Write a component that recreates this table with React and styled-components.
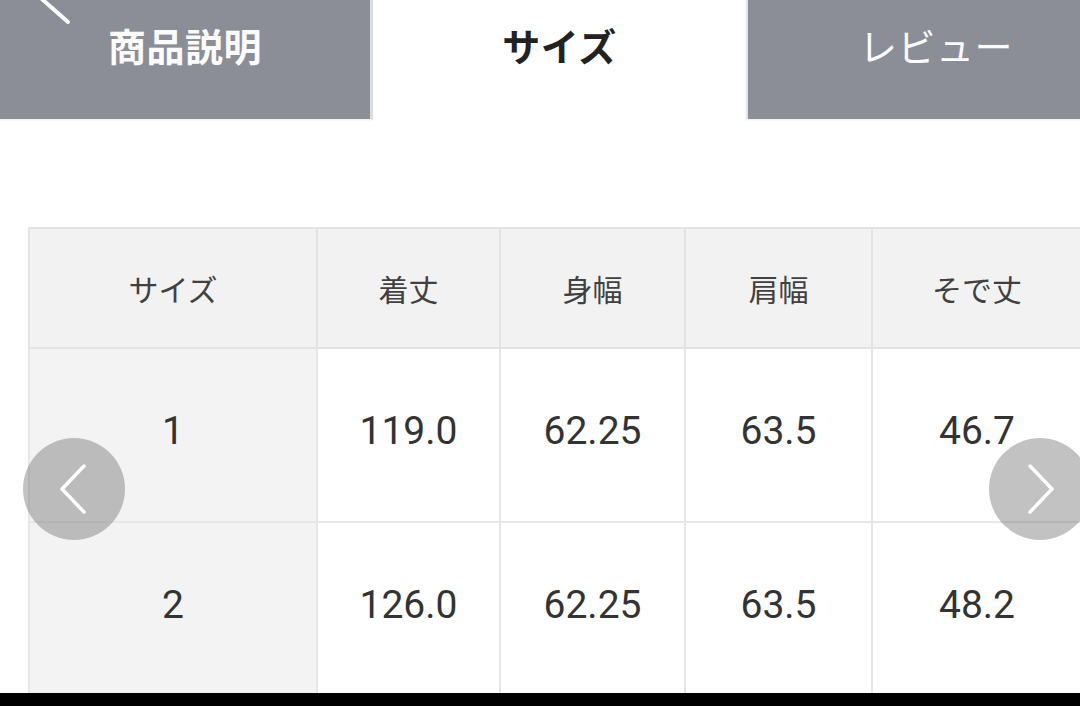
import React from 'react';
import styled, { createGlobalStyle } from "styled-components";

const GlobalStyle = createGlobalStyle`
  html, body {
    margin: 0;
    padding: 0;
    background: #fff;
    overflow: hidden;
  }
  body {
    font-family: "Noto Sans CJK JP", "Noto Sans", sans-serif;
  }
`;

const headers = ["サイズ", "着丈", "身幅", "肩幅", "そで丈"];
const rows = [
  ["1", "119.0", "62.25", "63.5", "46.7"],
  ["2", "126.0", "62.25", "63.5", "48.2"],
];
const colWidths = [288, 183, 185, 187, 210];

function App() {
  return (
    <Page>
      <GlobalStyle />
      <Screen>
        <TabBar>
          <Tab width={373} edge="right" weight={700}>商品説明</Tab>
          <Tab width={373} active weight={700}>サイズ</Tab>
          <Tab width={378} edge="left" weight={400}>レビュー</Tab>
        </TabBar>

        <TableWrap>
          <SizeTable>
            <colgroup>
              {colWidths.map((w, i) => <col key={i} style={{ width: w }} />)}
            </colgroup>
            <thead>
              <tr>
                {headers.map((h) => <Th key={h}>{h}</Th>)}
              </tr>
            </thead>
            <tbody>
              {rows.map((r) => (
                <tr key={r[0]}>
                  {r.map((v, i) => <Td key={i} first={i === 0}>{v}</Td>)}
                </tr>
              ))}
            </tbody>
          </SizeTable>
        </TableWrap>

        <BackMark width="80" height="30" viewBox="0 0 80 30">
          <polyline points="20,-20 43,0 68,22" fill="none" stroke="#fff" strokeWidth="4" strokeLinecap="round" />
        </BackMark>

        <NavButton side="left">
          <svg width="40" height="60" viewBox="0 0 40 60">
            <polyline points="31,7 9,30 31,53" fill="none" stroke="#fff" strokeWidth="3.5" strokeLinecap="round" strokeLinejoin="round" />
          </svg>
        </NavButton>
        <NavButton side="right">
          <svg width="40" height="60" viewBox="0 0 40 60">
            <polyline points="9,7 31,30 9,53" fill="none" stroke="#fff" strokeWidth="3.5" strokeLinecap="round" strokeLinejoin="round" />
          </svg>
        </NavButton>
      </Screen>
      <BottomBar />
    </Page>
  );
}

export default App;

const Page = styled.div`
  width: 1080px;
  height: 706px;
  display: flex;
  flex-direction: column;
  overflow: hidden;
`;

const Screen = styled.div`
  position: relative;
  flex: 1;
  overflow: hidden;
  background: #fff;
`;

const TabBar = styled.div`
  display: flex;
  height: 119px;
`;

const Tab = styled.div`
  width: ${(p) => p.width}px;
  flex-shrink: 0;
  box-sizing: border-box;
  display: flex;
  justify-content: center;
  align-items: flex-start;
  padding-top: 18px;
  font-size: 38px;
  line-height: 1.4;
  font-weight: ${(p) => p.weight};
  letter-spacing: 0.5px;
  color: ${(p) => (p.active ? "#222" : "#fbfbfc")};
  background: ${(p) => (p.active ? "#fff" : "#8b8e96")};
  border-right: ${(p) => (p.edge === "right" ? "3px solid #dcdde0" : "none")};
  border-left: ${(p) => (p.edge === "left" ? "2px solid #e4e5e7" : "none")};
  box-shadow: ${(p) => (p.active ? "none" : "0 1px 2px rgba(0,0,0,0.08)")};
`;

const TableWrap = styled.div`
  margin-top: 108px;
  padding-left: 28px;
  width: 1200px;
`;

const SizeTable = styled.table`
  border-collapse: collapse;
  table-layout: fixed;
  width: 1053px;
`;

const Th = styled.th`
  height: 118px;
  padding: 0;
  background: #f2f2f2;
  border: 2px solid #e3e3e3;
  font-family: "Noto Sans CJK JP", sans-serif;
  font-weight: 400;
  font-size: 30px;
  color: #404040;
  text-align: center;
  vertical-align: middle;
`;

const Td = styled.td`
  height: 174px;
  padding: 0 0 8px;
  box-sizing: border-box;
  background: ${(p) => (p.first ? "#f3f3f3" : "#fff")};
  border: 2px solid #e6e6e6;
  font-family: Roboto, "Liberation Sans", sans-serif;
  font-size: 39px;
  color: #333;
  text-align: center;
  vertical-align: middle;
`;

const BackMark = styled.svg`
  position: absolute;
  top: 0;
  left: 0;
`;

const NavButton = styled.div`
  position: absolute;
  top: 438px;
  ${(p) => (p.side === "left" ? "left: 23px;" : "left: 989px;")}
  width: 102px;
  height: 102px;
  border-radius: 50%;
  background: rgba(120, 120, 120, 0.45);
  display: flex;
  align-items: center;
  justify-content: center;
  svg { margin-left: ${(p) => (p.side === "left" ? "-2px" : "2px")}; }
`;

const BottomBar = styled.div`
  height: 13px;
  background: #000;
`;
